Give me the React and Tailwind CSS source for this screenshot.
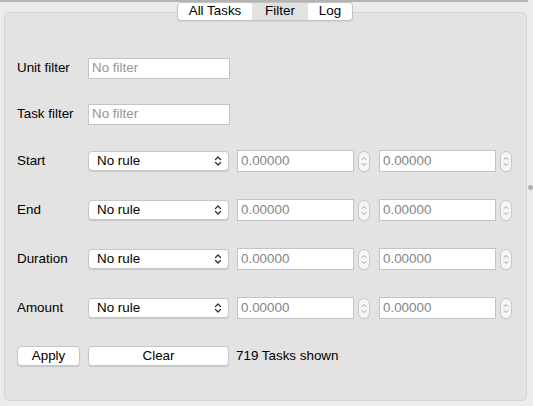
import React from "react";

const font = { fontFamily: '"Liberation Sans", Arial, sans-serif' };

function Spinner() {
  return (
    <div className="w-[12px] h-[21px] rounded-[6px] bg-[#f6f6f6] border border-[#c9c9c9] flex items-center justify-center shadow-[0_0.5px_0.5px_rgba(0,0,0,0.08)]">
      <svg width="6" height="13" viewBox="0 0 6 13" fill="none" stroke="#9c9c9c" strokeWidth="1" strokeLinecap="round" strokeLinejoin="round">
        <path d="M1 4.5 L3 2.5 L5 4.5" />
        <path d="M1 8.5 L3 10.5 L5 8.5" />
      </svg>
    </div>
  );
}

function NumberField() {
  return (
    <div className="flex items-center gap-[4px]">
      <div className="w-[117px] h-[22px] bg-white border border-[#c4c4c4] flex items-center pl-[3px] text-[13.4px] text-[#858585]">
        0.00000
      </div>
      <Spinner />
    </div>
  );
}

function Select() {
  return (
    <div className="w-[141px] h-[20px] bg-white rounded-[4px] border border-[#c6c6c6] shadow-[0_1px_1px_rgba(0,0,0,0.12)] flex items-center justify-between pl-[8px] pr-[6px] text-[13.4px] text-black">
      <span>No rule</span>
      <svg width="8" height="12" viewBox="0 0 8 12" fill="none" stroke="#2a2a2a" strokeWidth="1.2" strokeLinecap="round" strokeLinejoin="round">
        <path d="M1.5 4.5 L4 2 L6.5 4.5" />
        <path d="M1.5 7.5 L4 10 L6.5 7.5" />
      </svg>
    </div>
  );
}

function RuleRow({ label, mt }) {
  return (
    <div className={`flex items-center h-[22px] ${mt}`}>
      <div className="w-[71px] text-[13.4px] text-black">{label}</div>
      <Select />
      <div className="ml-[8px]">
        <NumberField />
      </div>
      <div className="ml-[9px]">
        <NumberField />
      </div>
    </div>
  );
}

function TextRow({ label, mt }) {
  return (
    <div className={`flex items-center h-[22px] ${mt}`}>
      <div className="w-[71px] text-[13.4px] text-black">{label}</div>
      <div className="w-[142px] h-[21px] bg-white border border-[#c4c4c4] flex items-center pl-[3px] text-[13.4px] text-[#959595]">
        No filter
      </div>
    </div>
  );
}

export default function App() {
  return (
    <div className="relative w-[533px] h-[406px] bg-[#ececec] overflow-hidden" style={font}>
      <div className="h-[2px] w-[528px] bg-[#b4b4b4]" />
      <div className="relative ml-[4px] mt-[10px] w-[523px] h-[389px] rounded-[5px] bg-[#e3e3e3] border border-[#d6d6d6] pl-[12px] pt-[44px]">
        <TextRow label="Unit filter" mt="" />
        <TextRow label="Task filter" mt="mt-[24px]" />
        <RuleRow label="Start" mt="mt-[25px]" />
        <RuleRow label="End" mt="mt-[27px]" />
        <RuleRow label="Duration" mt="mt-[27px]" />
        <RuleRow label="Amount" mt="mt-[27px]" />
        <div className="flex items-center h-[22px] mt-[26px]">
          <div className="w-[63px] h-[20px] bg-white rounded-[4px] border border-[#c6c6c6] shadow-[0_1px_1px_rgba(0,0,0,0.12)] flex items-center justify-center text-[13.4px] text-black">
            Apply
          </div>
          <div className="ml-[8px] w-[141px] h-[20px] bg-white rounded-[4px] border border-[#c6c6c6] shadow-[0_1px_1px_rgba(0,0,0,0.12)] flex items-center justify-center text-[13.4px] text-black">
            Clear
          </div>
          <div className="ml-[7px] text-[13.4px] text-black">719 Tasks shown</div>
        </div>
      </div>
      {/* segmented tab control overlapping the group box border */}
      <div className="absolute left-[177px] top-[2px] w-[176px] h-[19px] rounded-[4px] border border-[#c3c3c3] bg-white flex overflow-hidden shadow-[0_1px_1px_rgba(0,0,0,0.08)] text-[13.4px] text-black">
        <div className="w-[74px] flex items-center justify-center">All Tasks</div>
        <div className="w-[56px] flex items-center justify-center bg-[#e2e2e2]">Filter</div>
        <div className="flex-1 flex items-center justify-center">Log</div>
      </div>
      {/* splitter handle */}
      <div className="absolute left-[528px] top-[185px] w-[5px] h-[5px] rounded-full bg-[#b0b0b0]" />
    </div>
  );
}
